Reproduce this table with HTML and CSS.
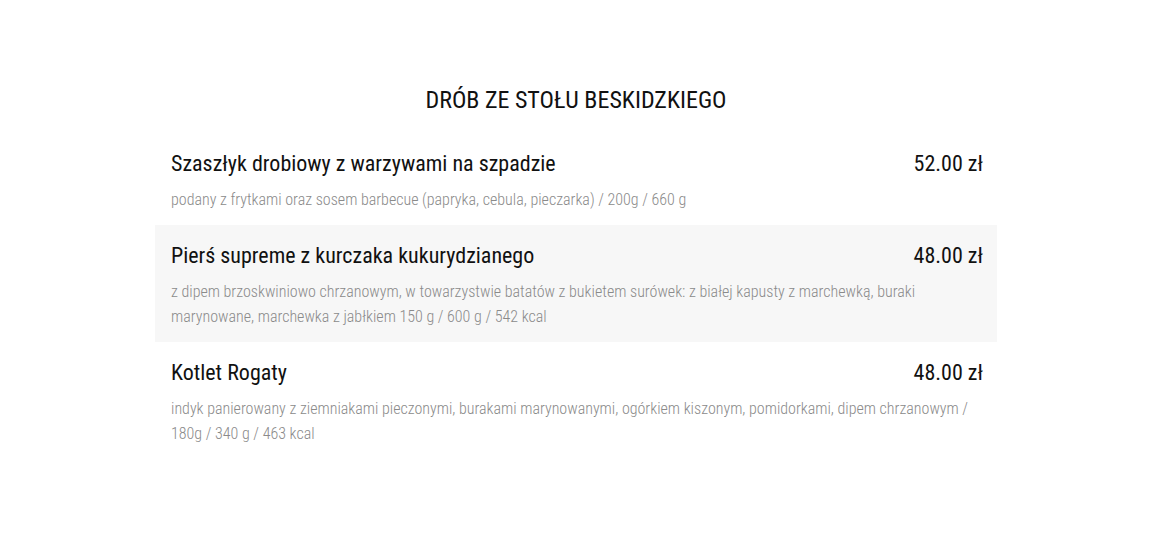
FILE: index.html
```html
<!DOCTYPE html>
<html lang="pl">
<head>
<meta charset="utf-8">
<title>Drób ze stołu beskidzkiego</title>
<link rel="stylesheet" href="styles.css">
</head>
<body>
<section class="menu">
  <h2 class="menu-title">DRÓB ZE STOŁU BESKIDZKIEGO</h2>
  <div class="item">
    <div class="item-head">
      <span class="item-name">Szaszłyk drobiowy z warzywami na szpadzie</span>
      <span class="item-price">52.00 zł</span>
    </div>
    <p class="item-desc">podany z frytkami oraz sosem barbecue (papryka, cebula, pieczarka) / 200g / 660 g</p>
  </div>
  <div class="item item-alt">
    <div class="item-head">
      <span class="item-name">Pierś supreme z kurczaka kukurydzianego</span>
      <span class="item-price">48.00 zł</span>
    </div>
    <p class="item-desc">z dipem brzoskwiniowo chrzanowym, w towarzystwie batatów z bukietem surówek: z białej kapusty z marchewką, buraki marynowane, marchewka z jabłkiem 150 g / 600 g / 542 kcal</p>
  </div>
  <div class="item">
    <div class="item-head">
      <span class="item-name">Kotlet Rogaty</span>
      <span class="item-price">48.00 zł</span>
    </div>
    <p class="item-desc">indyk panierowany z ziemniakami pieczonymi, burakami marynowanymi, ogórkiem kiszonym, pomidorkami, dipem chrzanowym / 180g / 340 g / 463 kcal</p>
  </div>
</section>
</body>
</html>
```
FILE: styles.css
```css
html, body {
  margin: 0;
  padding: 0;
  background: #fff;
}
body {
  padding-right: 18px;
  font-family: "Roboto Condensed", Roboto, "Liberation Sans", sans-serif;
  font-stretch: condensed;
  color: #111;
}
.menu {
  width: 842px;
  margin: 0 auto;
  padding-top: 84px;
}
.menu-title {
  margin: 0 0 17px;
  text-align: center;
  font-weight: 400;
  font-size: 24px;
  line-height: 32px;
}
.item {
  padding: 18px 14px 13px 16px;
}
.item-alt {
  background: #f7f7f7;
}
.item-head {
  display: flex;
  justify-content: space-between;
  align-items: baseline;
}
.item-name, .item-price {
  font-size: 22px;
  line-height: 26px;
  color: #111;
}
.item-desc {
  margin: 10px 0 0;
  font-size: 16px;
  font-weight: 300;
  line-height: 25px;
  color: #8a8a8a;
}
```
